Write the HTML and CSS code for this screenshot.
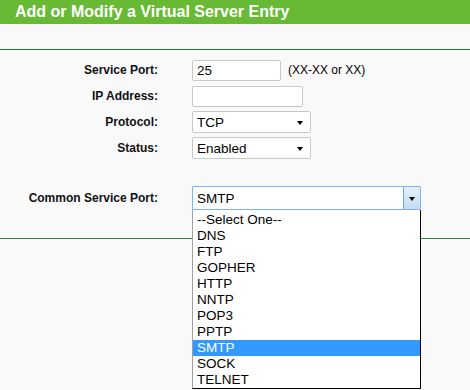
FILE: index.html
```html
<!DOCTYPE html>
<html lang="en">

<head>
    <meta charset="utf-8">
    <title>Add or Modify a Virtual Server Entry</title>
    <link rel="stylesheet" href="styles.css">
</head>

<body>
    <div class="title">Add or Modify a Virtual Server Entry</div>
    <div class="blank"></div>
    <div class="rule"></div>

    <div class="form">
        <div class="row">
            <div class="label">Service Port:</div>
            <div class="field">
                <div class="input port">25</div>
                <span class="hint">(XX-XX or XX)</span>
            </div>
        </div>
        <div class="row">
            <div class="label">IP Address:</div>
            <div class="field">
                <div class="input ip"></div>
            </div>
        </div>
        <div class="row">
            <div class="label">Protocol:</div>
            <div class="field">
                <div class="select small">
                    <span>TCP</span>
                    <i class="caret"></i>
                </div>
            </div>
        </div>
        <div class="row">
            <div class="label">Status:</div>
            <div class="field">
                <div class="select small">
                    <span>Enabled</span>
                    <i class="caret"></i>
                </div>
            </div>
        </div>

        <div class="row common">
            <div class="label">Common Service Port:</div>
            <div class="field">
                <div class="combo">
                    <div class="select wide">
                        <span>SMTP</span>
                        <div class="btn"><i class="caret"></i></div>
                    </div>
                    <ul class="options">
                        <li>--Select One--</li>
                        <li>DNS</li>
                        <li>FTP</li>
                        <li>GOPHER</li>
                        <li>HTTP</li>
                        <li>NNTP</li>
                        <li>POP3</li>
                        <li>PPTP</li>
                        <li class="on">SMTP</li>
                        <li>SOCK</li>
                        <li>TELNET</li>
                    </ul>
                </div>
            </div>
        </div>
    </div>

    <div class="rule second"></div>
</body>

</html>
```

FILE: styles.css
```css
  html,
  body {
      min-height: 100%;
  }

  body {
      margin: 0;
      min-height: 390px;
      background: #f9f9f9;
      font-family: "Liberation Sans", Arial, sans-serif;
      color: #000;
  }

  .title {
      height: 24px;
      line-height: 24px;
      padding-left: 15px;
      background: #68b933;
      color: #fff;
      font-size: 16px;
      font-weight: bold;
  }

  .blank {
      height: 25px;
  }

  .rule {
      height: 0;
      border-top: 1px solid #197334;
  }

  .form {
      padding-top: 7px;
  }

  .row {
      display: flex;
      align-items: center;
      height: 26px;
  }

  .label {
      width: 158px;
      text-align: right;
      font-size: 12px;
      font-weight: bold;
      color: #111;
  }

  .field {
      display: flex;
      align-items: center;
      margin-left: 34px;
  }

  .input {
      box-sizing: border-box;
      height: 21px;
      line-height: 19px;
      padding-left: 4px;
      background: #fff;
      border: 1px solid #c8c8c8;
      border-radius: 2px;
      font-size: 13.5px;
  }

  .port {
      width: 89px;
  }

  .ip {
      width: 111px;
  }

  .hint {
      margin-left: 7px;
      font-size: 12px;
  }

  .select {
      box-sizing: border-box;
      display: flex;
      align-items: center;
      justify-content: space-between;
      height: 22px;
      padding-left: 4px;
      background: #fff;
      border: 1px solid #c8c8c8;
      border-radius: 2px;
      font-size: 13.5px;
  }

  .small {
      width: 119px;
      padding-right: 7px;
  }

  .caret {
      width: 0;
      height: 0;
      border-left: 3.5px solid transparent;
      border-right: 3.5px solid transparent;
      border-top: 4px solid #000;
      margin-top: 2px;
  }

  .common {
      margin-top: 25px;
      height: 24px;
  }

  .combo {
      position: relative;
  }

  .wide {
      width: 229px;
      height: 24px;
      padding-right: 0;
      border-color: #7eb4ea;
      border-radius: 1px;
  }

  .btn {
      box-sizing: border-box;
      display: flex;
      align-items: center;
      justify-content: center;
      width: 17px;
      height: 22px;
      background: linear-gradient(#e4f0fc, #c2dcf4);
      border-left: 1px solid #6fa8e0;
  }

  .options {
      position: absolute;
      left: 0;
      top: 24px;
      z-index: 2;
      box-sizing: border-box;
      width: 229px;
      margin: 0;
      padding: 2px 0 0;
      list-style: none;
      background: #fff;
      border: 1px solid #000;
      border-left-color: #a0a0a0;
      border-top: 0;
  }

  .options li {
      height: 16px;
      line-height: 16px;
      padding-left: 4px;
      font-size: 13.5px;
  }

  .options .on {
      background: #3399ff;
      color: #fff;
  }

  .second {
      margin-top: 28px;
      border-top-color: #2a8a3c;
  }
```
